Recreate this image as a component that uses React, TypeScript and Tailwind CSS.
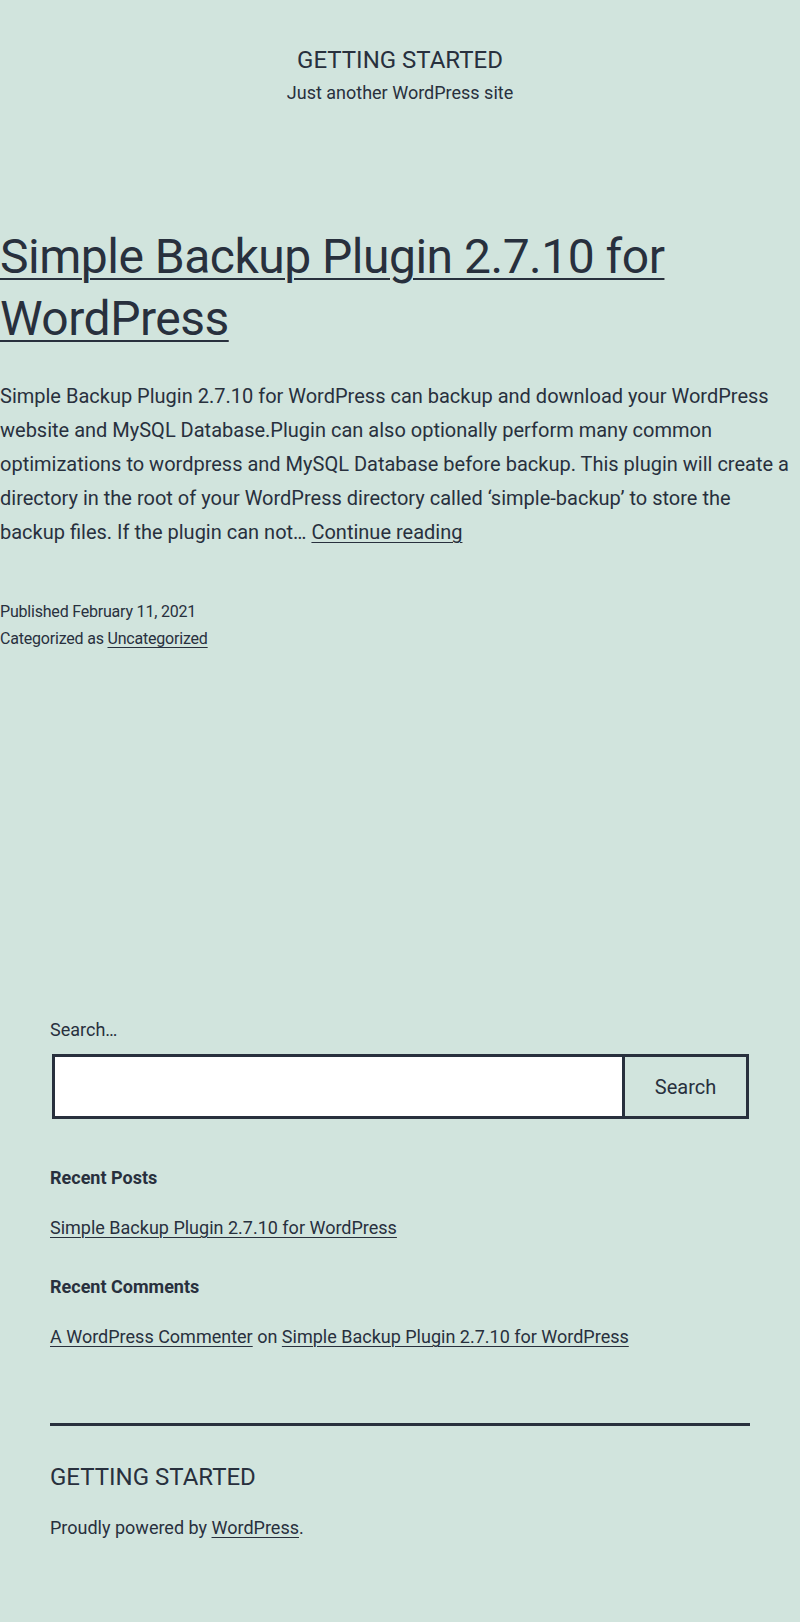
export default function App() {
  return (
    <div className="min-h-screen bg-[#d1e4dd] pb-[80px] text-[#28303d] font-['Roboto','Liberation_Sans',sans-serif]">
      <header className="pt-[45px] text-center">
        <p className="text-[24px] leading-[31px] uppercase">Getting Started</p>
        <p className="mt-[2px] text-[18px] leading-[30px]">Just another WordPress site</p>
      </header>

      <main className="mt-[118px]">
        <article>
          <h2 className="text-[48px] font-normal leading-[62px] tracking-[-0.5px]">
            <a href="#" className="underline decoration-[2px] underline-offset-[5px]">
              Simple Backup Plugin 2.7.10 for WordPress
            </a>
          </h2>
          <p className="mt-[29px] text-[20px] leading-[34px]">
            Simple Backup Plugin 2.7.10 for WordPress can backup and download your WordPress website and MySQL
            Database.Plugin can also optionally perform many common optimizations to wordpress and MySQL Database
            before backup. This plugin will create a directory in the root of your WordPress directory called
            ‘simple-backup’ to store the backup files. If the plugin can not…{" "}
            <a href="#" className="underline decoration-[1px] underline-offset-[3px]">
              Continue reading
            </a>
          </p>
          <footer className="mt-[49px] text-[16px] leading-[27px] tracking-[-0.2px]">
            <p>Published February 11, 2021</p>
            <p>
              Categorized as{" "}
              <a href="#" className="underline decoration-[1px] underline-offset-[3px]">
                Uncategorized
              </a>
            </p>
          </footer>
        </article>
      </main>

      <aside className="mx-[50px] mt-[363px]">
        <form onSubmit={(e) => e.preventDefault()}>
          <label className="block text-[18px] leading-[30px]">Search…</label>
          <div className="ml-[2px] mt-[9px] flex h-[65px] w-[697px]">
            <input type="search" className="min-w-0 flex-1 border-[3px] border-[#28303d] bg-white px-3 text-[18px] outline-none" />
            <button
              type="submit"
              className="w-[124px] border-[3px] border-l-0 border-[#28303d] bg-transparent text-[20px] text-[#28303d]"
            >
              Search
            </button>
          </div>
        </form>

        <section className="mt-[45px]">
          <h2 className="text-[18px] font-bold leading-[27px]">Recent Posts</h2>
          <ul className="mt-[22px] text-[18px] leading-[30px]">
            <li>
              <a href="#" className="underline decoration-[1px] underline-offset-[3px]">
                Simple Backup Plugin 2.7.10 for WordPress
              </a>
            </li>
          </ul>
        </section>

        <section className="mt-[30px]">
          <h2 className="text-[18px] font-bold leading-[27px]">Recent Comments</h2>
          <ul className="mt-[22px] text-[18px] leading-[30px]">
            <li>
              <a href="#" className="underline decoration-[1px] underline-offset-[3px]">
                A WordPress Commenter
              </a>{" "}
              on{" "}
              <a href="#" className="underline decoration-[1px] underline-offset-[3px]">
                Simple Backup Plugin 2.7.10 for WordPress
              </a>
            </li>
          </ul>
        </section>
      </aside>

      <footer className="mx-[50px] mt-[71px] border-t-[3px] border-[#28303d]">
        <p className="mt-[36px] text-[24px] leading-[31px] uppercase">Getting Started</p>
        <p className="mt-[20px] text-[18px] leading-[30px]">
          Proudly powered by{" "}
          <a href="#" className="underline decoration-[1px] underline-offset-[3px]">
            WordPress
          </a>
          .
        </p>
      </footer>
    </div>
  );
}
